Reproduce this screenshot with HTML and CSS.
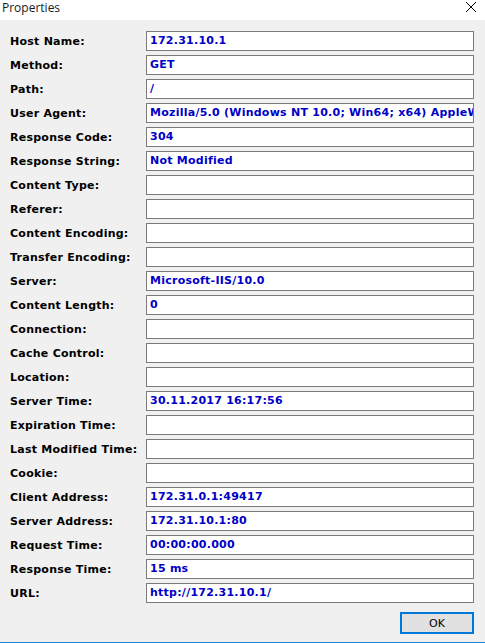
FILE: index.html
```html
<!DOCTYPE html>
<html>
<head>
<meta charset="utf-8">
<title>Properties</title>
<link rel="stylesheet" href="styles.css">
</head>
<body>
<div class="window">
  <div class="titlebar">
    <span class="title">Properties</span>
    <svg class="close" width="12" height="12" viewBox="0 0 12 12"><path d="M1 1 L11 11 M11 1 L1 11" stroke="#000" stroke-width="1" fill="none"/></svg>
  </div>
  <div class="content">
    <div class="rows">
      <div class="row"><span class="label">Host Name:</span><div class="field">172.31.10.1</div></div>
      <div class="row"><span class="label">Method:</span><div class="field">GET</div></div>
      <div class="row"><span class="label">Path:</span><div class="field">/</div></div>
      <div class="row"><span class="label">User Agent:</span><div class="field">Mozilla/5.0 (Windows NT 10.0; Win64; x64) AppleWebKit/537.36 (KHTML, like Gecko)</div></div>
      <div class="row"><span class="label">Response Code:</span><div class="field">304</div></div>
      <div class="row"><span class="label">Response String:</span><div class="field">Not Modified</div></div>
      <div class="row"><span class="label">Content Type:</span><div class="field"></div></div>
      <div class="row"><span class="label">Referer:</span><div class="field"></div></div>
      <div class="row"><span class="label">Content Encoding:</span><div class="field"></div></div>
      <div class="row"><span class="label">Transfer Encoding:</span><div class="field"></div></div>
      <div class="row"><span class="label">Server:</span><div class="field">Microsoft-IIS/10.0</div></div>
      <div class="row"><span class="label">Content Length:</span><div class="field">0</div></div>
      <div class="row"><span class="label">Connection:</span><div class="field"></div></div>
      <div class="row"><span class="label">Cache Control:</span><div class="field"></div></div>
      <div class="row"><span class="label">Location:</span><div class="field"></div></div>
      <div class="row"><span class="label">Server Time:</span><div class="field">30.11.2017 16:17:56</div></div>
      <div class="row"><span class="label">Expiration Time:</span><div class="field"></div></div>
      <div class="row"><span class="label">Last Modified Time:</span><div class="field"></div></div>
      <div class="row"><span class="label">Cookie:</span><div class="field"></div></div>
      <div class="row"><span class="label">Client Address:</span><div class="field">172.31.0.1:49417</div></div>
      <div class="row"><span class="label">Server Address:</span><div class="field">172.31.10.1:80</div></div>
      <div class="row"><span class="label">Request Time:</span><div class="field">00:00:00.000</div></div>
      <div class="row"><span class="label">Response Time:</span><div class="field">15 ms</div></div>
      <div class="row"><span class="label">URL:</span><div class="field">http://172.31.10.1/</div></div>
    </div>
    <div class="buttons">
      <button class="ok">OK</button>
    </div>
  </div>
</div>
</body>
</html>
```

FILE: styles.css
```css
html, body {
  margin: 0;
  padding: 0;
  background: #f0f0f0;
}
.window {
  width: 485px;
  height: 643px;
  display: flex;
  flex-direction: column;
  background: #f0f0f0;
  border-bottom: 1px solid #1883d7;
  box-sizing: border-box;
}
.titlebar {
  height: 20px;
  background: #ffffff;
  display: flex;
  align-items: center;
  justify-content: space-between;
  padding: 0 8px 0 2px;
  flex: none;
}
.title {
  font-family: "Open Sans", "Liberation Sans", sans-serif;
  font-size: 12px;
  color: #1a1a1a;
  margin-top: -6px;
}
.close {
  margin-top: -6px;
}
.content {
  flex: 1;
  display: flex;
  flex-direction: column;
  padding: 11px 11px 0 10px;
}
.rows {
  display: flex;
  flex-direction: column;
  gap: 4px;
}
.row {
  display: flex;
  align-items: center;
  height: 20px;
}
.label {
  width: 136px;
  flex: none;
  font-family: "DejaVu Sans", sans-serif;
  font-weight: bold;
  font-size: 11px;
  letter-spacing: 0.25px;
  color: #000;
}
.field {
  flex: none;
  width: 328px;
  height: 20px;
  box-sizing: border-box;
  border: 1px solid #7a7a7a;
  background: #fff;
  font-family: "DejaVu Sans", sans-serif;
  font-weight: bold;
  font-size: 11px;
  letter-spacing: 0.25px;
  color: #0000c8;
  line-height: 18px;
  padding-left: 3px;
  white-space: nowrap;
  overflow: hidden;
}
.buttons {
  display: flex;
  justify-content: flex-end;
  padding-top: 9px;
}
.ok {
  width: 74px;
  height: 22px;
  box-sizing: border-box;
  border: 2px solid #0078d7;
  background: #e1e1e1;
  font-family: "DejaVu Sans", sans-serif;
  font-size: 11px;
  color: #000;
  padding: 0;
}
```
